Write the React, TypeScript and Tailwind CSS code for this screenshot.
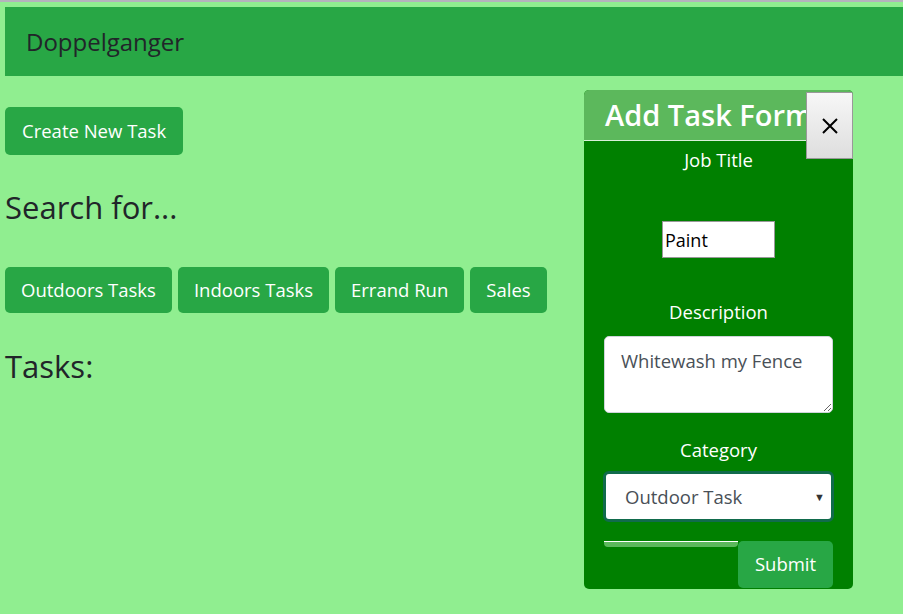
import React from "react";

const font = { fontFamily: '"Open Sans", "Noto Sans", Arial, sans-serif' };

function GreenButton({ label }: { label: string }) {
  return (
    <button className="h-[46px] shrink-0 whitespace-nowrap rounded-[5px] bg-[#28a745] px-[16px] text-[18.5px] leading-none text-white">
      {label}
    </button>
  );
}

export default function App() {
  return (
    <div className="min-h-[614px] w-[903px] overflow-hidden border-t-2 border-[#b4b4bc] bg-[#90ee90] pl-[5px] pt-[5px]" style={font}>
      <nav className="flex h-[69px] items-center bg-[#28a745] pl-[21px] text-[24px] text-[#212529]">Doppelganger</nav>

      <div className="flex items-start">
        <div className="min-w-0 flex-1 pt-[31px]">
          <button className="h-[48px] whitespace-nowrap rounded-[5px] bg-[#28a745] px-[17px] text-[18.5px] leading-none text-white">Create New Task</button>
          <h3 className="mt-[37px] text-[31px] font-medium leading-none text-[#212529]">Search for...</h3>
          <div className="mt-[44px] flex gap-[6px]">
            <GreenButton label="Outdoors Tasks" />
            <GreenButton label="Indoors Tasks" />
            <GreenButton label="Errand Run" />
            <GreenButton label="Sales" />
          </div>
          <h3 className="mt-[38px] text-[31px] font-medium leading-none text-[#212529]">Tasks:</h3>
        </div>

        <div className="relative mr-[50px] mt-[14px] w-[269px] overflow-hidden rounded-[5px] bg-[#008000] pb-[1px]">
          <div className="h-[51px] overflow-hidden border-b border-[#d8f0d8] bg-[#5cb85c] pl-[21px] pt-[5px]">
            <h2 className="whitespace-nowrap text-[29px] font-semibold leading-[40px] text-white">Add Task Form</h2>
          </div>
          <button className="absolute right-0 top-[2px] flex h-[67px] w-[47px] items-center justify-center border border-[#999] bg-gradient-to-b from-[#f7f7f7] to-[#dedede]">
            <svg width="18" height="18" viewBox="0 0 18 18">
              <path d="M2 2 L16 16 M16 2 L2 16" stroke="#000" strokeWidth="2" />
            </svg>
          </button>

          <div className="flex flex-col items-center text-[18.5px] text-white">
            <label className="mt-[6px] leading-[26px]">Job Title</label>
            <input
              defaultValue="Paint"
              className="mt-[48px] h-[37px] w-[113px] border border-[#999] bg-white px-[2px] text-[18px] text-black outline-none"
            />
            <label className="mt-[41px] leading-[26px]">Description</label>
            <textarea
              defaultValue="Whitewash my Fence"
              className="mt-[11px] h-[77px] w-[229px] resize-y rounded-[5px] border border-[#ced4da] bg-white py-[9px] pl-[16px] pr-[4px] text-[18.5px] leading-[30px] text-[#495057] outline-none"
            />
            <label className="mt-[24px] leading-[26px]">Category</label>
            <div className="relative mt-[8px] h-[51px] w-[231px] shrink-0 rounded-[6px] border-[3px] border-[#116b4c] bg-white">
              <div className="flex h-full items-center pl-[19px] text-[18.5px] text-[#495057]">Outdoor Task</div>
              <span className="absolute right-[6px] top-[15px] text-[11px] text-[#333]">▼</span>
            </div>
            <div className="mt-[19px] flex w-[229px] items-start">
              <div className="h-[6px] w-[134px] rounded-b-[4px] border-t border-white bg-[#5cb85c]" />
              <button className="h-[47px] flex-1 rounded-[5px] bg-[#28a745] text-[18.5px] leading-none text-white">Submit</button>
            </div>
          </div>
        </div>
      </div>
    </div>
  );
}
